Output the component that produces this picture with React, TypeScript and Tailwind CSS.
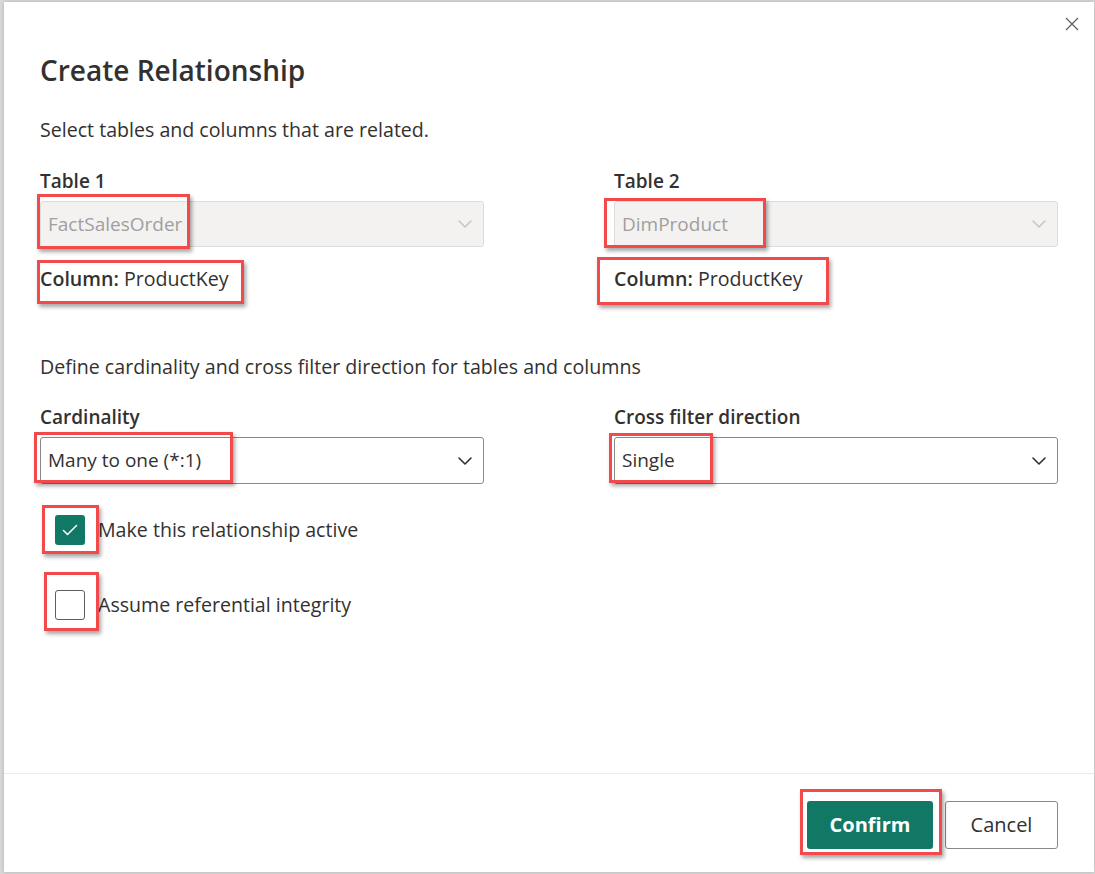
import React from "react";

const font = { fontFamily: '"Open Sans", "Noto Sans", sans-serif' };

function Chevron({ disabled }: { disabled?: boolean }) {
  return (
    <svg width="16" height="10" viewBox="0 0 16 10" className={disabled ? "text-[#c8c6c4]" : "text-[#323130]"}>
      <path d="M2 2l6 6 6-6" fill="none" stroke="currentColor" strokeWidth="1.6" strokeLinecap="round" strokeLinejoin="round" />
    </svg>
  );
}

function Select({ value, disabled }: { value: string; disabled?: boolean }) {
  return (
    <div
      className={`flex items-center justify-between rounded-[3px] border pl-[7px] pr-[10px] text-[19px] ${
        disabled
          ? "h-[46px] border-[#dedcda] bg-[#f3f2f1] text-[#a19f9d]"
          : "h-[47px] border-[#8a8886] bg-white text-[#323130]"
      }`}
    >
      <span>{value}</span>
      <Chevron disabled={disabled} />
    </div>
  );
}

function Mark({ x, y, w, h }: { x: number; y: number; w: number; h: number }) {
  return (
    <div
      className="pointer-events-none absolute border-[3px] border-[#f24a4a] shadow-[2px_3px_4px_rgba(0,0,0,0.35)]"
      style={{ left: x - 4, top: y - 2, width: w, height: h }}
    />
  );
}

export default function App() {
  return (
    <div className="h-[874px] w-[1095px] bg-[#d9d9d9] pl-[4px] pt-[2px]" style={font}>
      <div className="relative flex h-[870px] w-[1090px] flex-col bg-white text-[#323130] shadow-[0_0_4px_rgba(0,0,0,0.2)]">
        <button className="absolute right-[14px] top-[14px] flex h-[16px] w-[16px] items-center justify-center text-[#605e5c]">
          <svg width="14" height="14" viewBox="0 0 14 14">
            <path d="M1 1l12 12M13 1L1 13" stroke="currentColor" strokeWidth="1.2" />
          </svg>
        </button>

        <div className="px-[36px] pt-[48px]">
          <h1 className="flex h-[40px] items-center text-[28px] font-semibold">Create Relationship</h1>
          <p className="mt-[26px] flex h-[28px] items-center text-[19.6px]">Select tables and columns that are related.</p>

          <div className="mt-[23px] grid grid-cols-2 gap-x-[130px]">
            <div>
              <div className="flex h-[28px] items-center text-[19px] font-semibold">Table 1</div>
              <div className="mt-[6px]">
                <Select value="FactSalesOrder" disabled />
              </div>
              <div className="mt-[18px] flex h-[28px] items-center text-[19.6px]">
                <span className="font-semibold">Column:</span>&nbsp;ProductKey
              </div>
            </div>
            <div>
              <div className="flex h-[28px] items-center text-[19px] font-semibold">Table 2</div>
              <div className="mt-[6px]">
                <Select value="DimProduct" disabled />
              </div>
              <div className="mt-[18px] flex h-[28px] items-center text-[19.6px]">
                <span className="font-semibold">Column:</span>&nbsp;ProductKey
              </div>
            </div>
          </div>

          <p className="mt-[60px] flex h-[28px] items-center text-[19.6px]">
            Define cardinality and cross filter direction for tables and columns
          </p>

          <div className="mt-[22px] grid grid-cols-2 gap-x-[130px]">
            <div>
              <div className="flex h-[28px] items-center text-[19px] font-semibold">Cardinality</div>
              <div className="mt-[6px]">
                <Select value="Many to one (*:1)" />
              </div>
            </div>
            <div>
              <div className="flex h-[28px] items-center text-[19px] font-semibold">Cross filter direction</div>
              <div className="mt-[6px]">
                <Select value="Single" />
              </div>
            </div>
          </div>

          <label className="mt-[31px] flex h-[30px] items-center pl-[15px] text-[19.6px]">
            <span className="flex h-[30px] w-[30px] items-center justify-center rounded-[3px] bg-[#117865]">
              <svg width="16" height="12" viewBox="0 0 16 12">
                <path d="M1.5 6.5l4 4 9-9" fill="none" stroke="white" strokeWidth="1.5" strokeLinecap="round" strokeLinejoin="round" />
              </svg>
            </span>
            <span className="ml-[13px]">Make this relationship active</span>
          </label>

          <label className="mt-[45px] flex h-[30px] items-center pl-[15px] text-[19.6px]">
            <span className="h-[30px] w-[30px] rounded-[3px] border border-[#605e5c] bg-white" />
            <span className="ml-[13px]">Assume referential integrity</span>
          </label>
        </div>

        <div className="flex-1" />

        <div className="flex h-[99px] justify-end gap-[12px] border-t border-[#edebe9] pr-[36px] pt-[27px]">
          <button className="h-[48px] w-[126px] rounded-[3px] bg-[#117865] text-[20px] font-bold text-white">Confirm</button>
          <button className="h-[48px] w-[113px] rounded-[3px] border border-[#8a8886] bg-white text-[20px] text-[#323130]">
            Cancel
          </button>
        </div>

        <Mark x={37} y={194} w={153} h={55} />
        <Mark x={37} y={260} w={207} h={44} />
        <Mark x={604} y={198} w={162} h={50} />
        <Mark x={597} y={257} w={232} h={48} />
        <Mark x={34} y={432} w={199} h={51} />
        <Mark x={609} y={433} w={104} h={50} />
        <Mark x={42} y={505} w={57} h={49} />
        <Mark x={44} y={572} w={55} h={59} />
        <Mark x={800} y={789} w={142} h={66} />
      </div>
    </div>
  );
}
